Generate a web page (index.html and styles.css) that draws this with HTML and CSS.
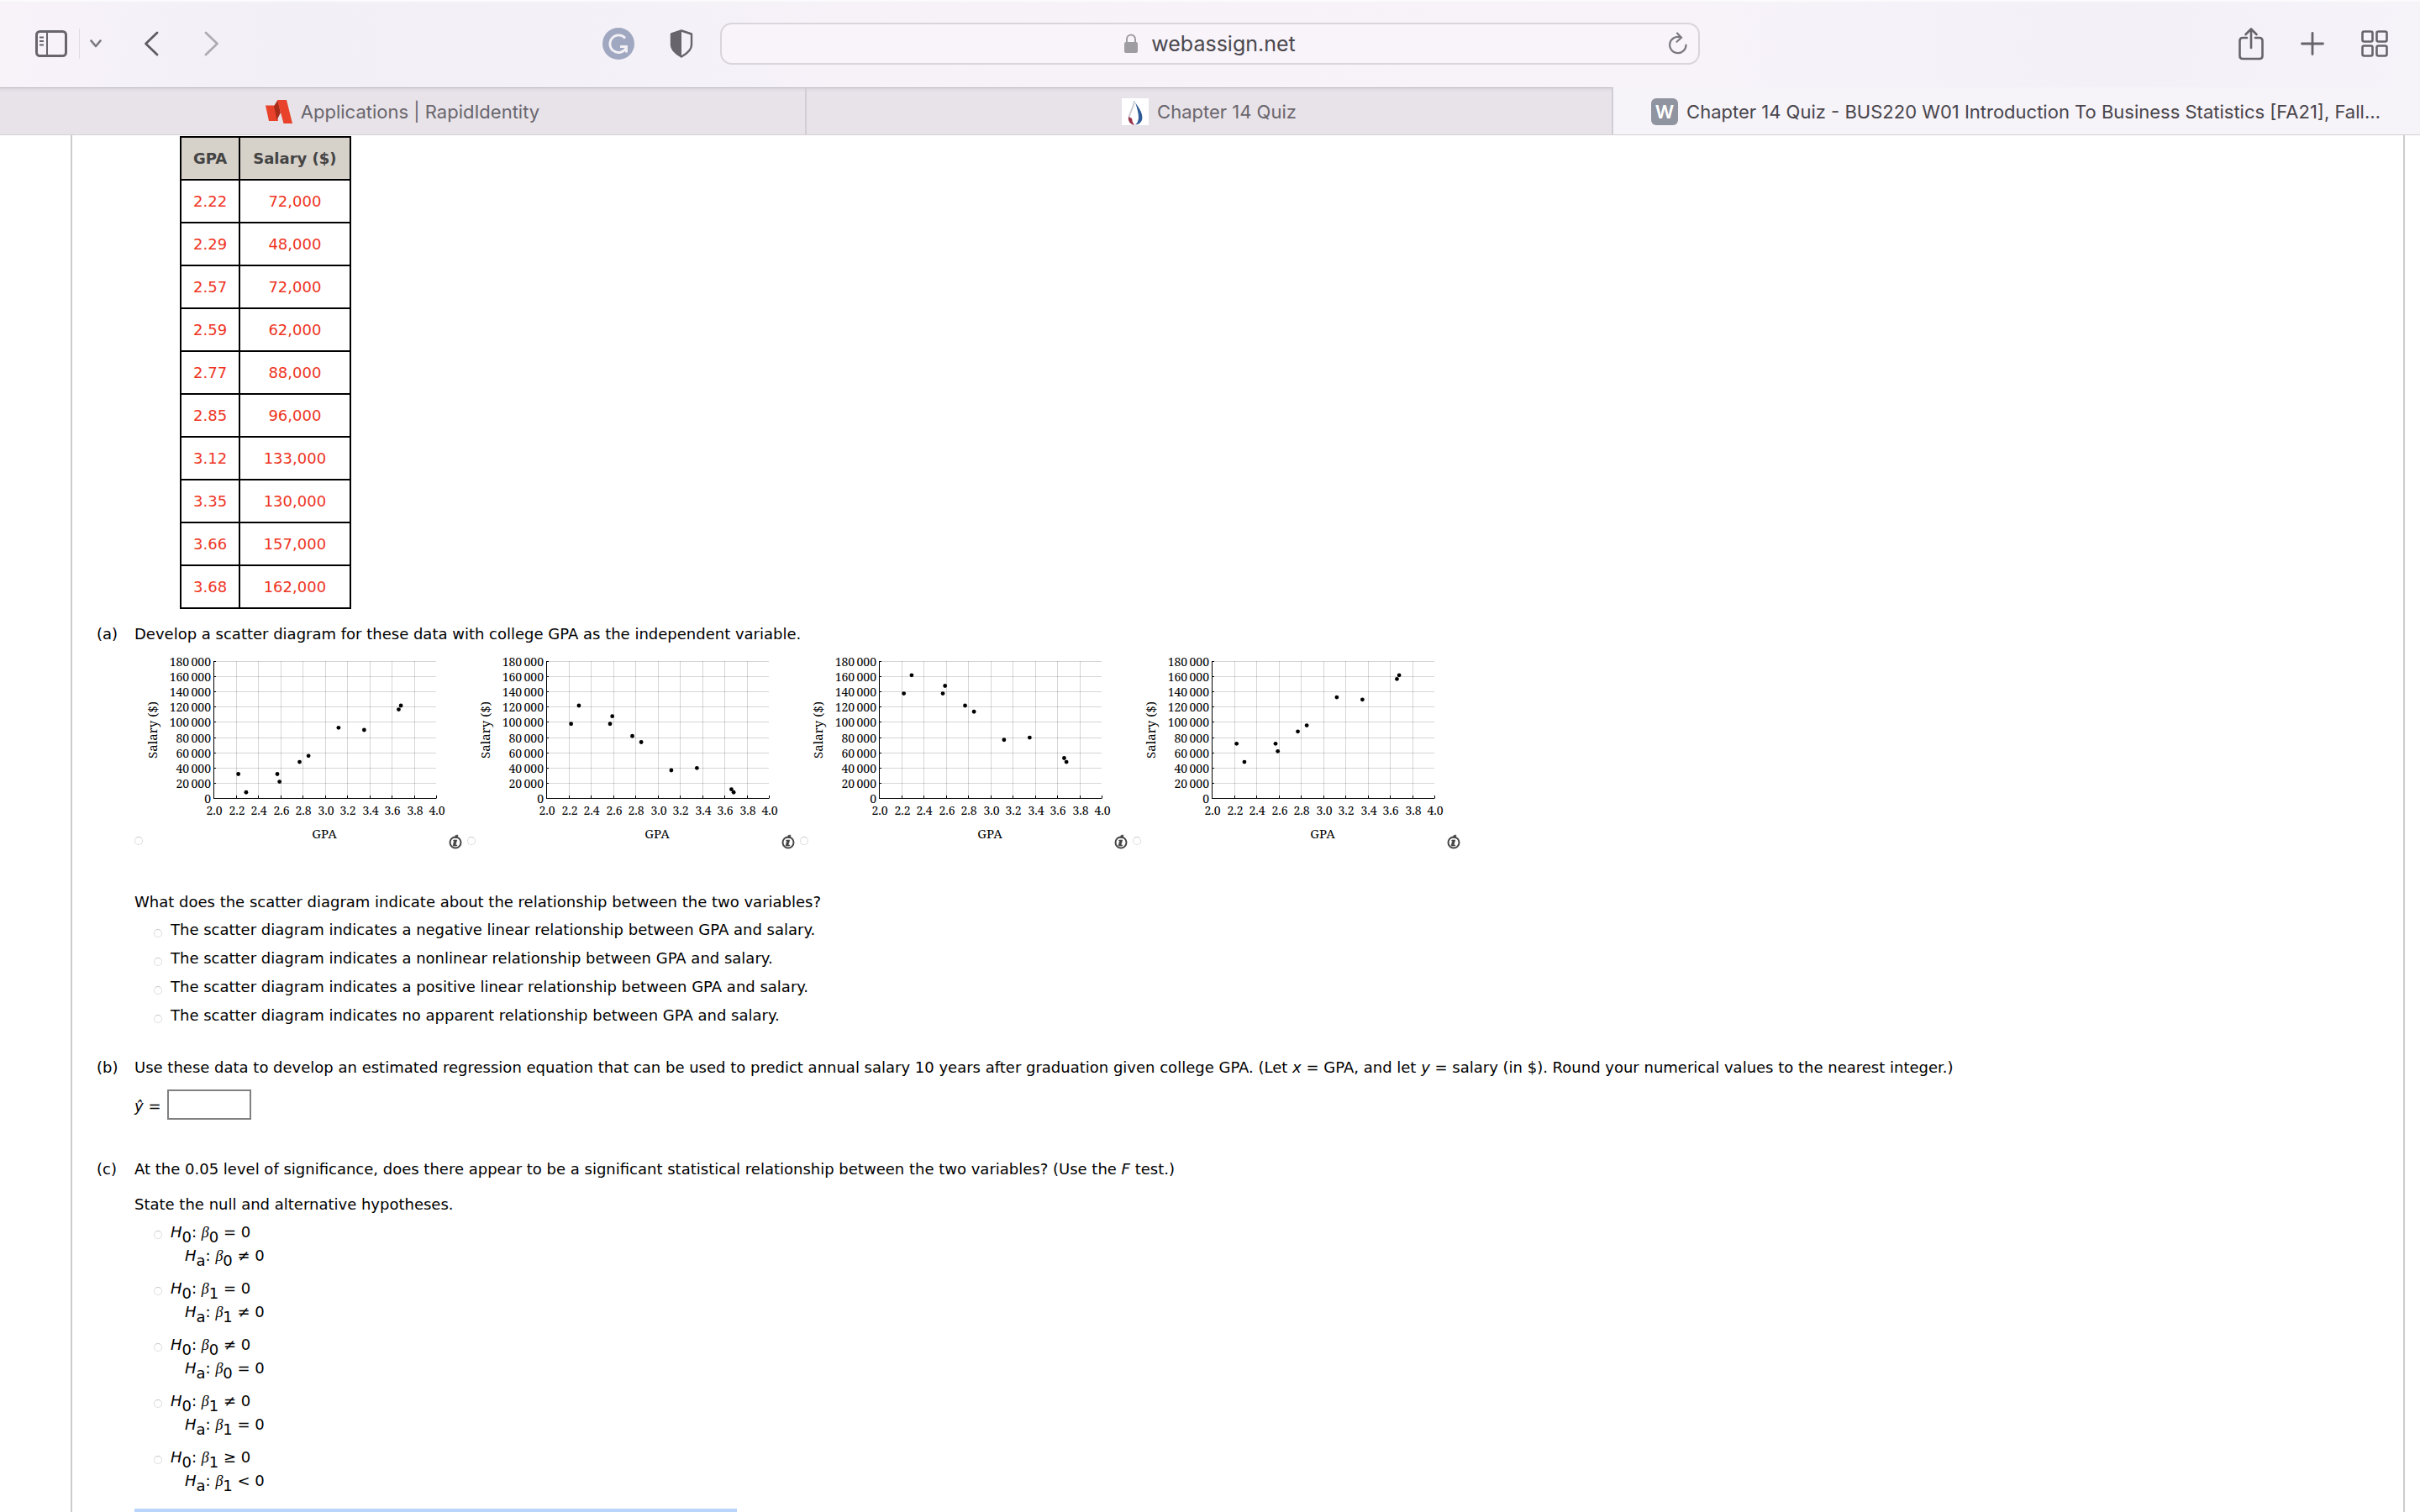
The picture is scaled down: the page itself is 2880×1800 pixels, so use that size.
FILE: index.html
```html
<!DOCTYPE html>
<html lang="en">
<head>
<meta charset="utf-8">
<title>Chapter 14 Quiz - BUS220 W01 Introduction To Business Statistics</title>
<link rel="stylesheet" href="styles.css">
</head>
<body>
<header class="toolbar">
  <div class="tools tools-left">
    <button class="tool" type="button" aria-label="Sidebar">
      <svg width="38" height="32" viewBox="0 0 38 32" fill="none" stroke="#68646b" stroke-width="3"><rect x="1.5" y="1.5" width="35" height="29" rx="4"/><path d="M14 2v28M5 8.500h5M5 13h5M5 17.500h5" stroke-width="2"/></svg>
    </button>
    <span class="tool-divider"></span>
    <button class="tool tool-chevron" type="button" aria-label="Tab groups">
      <svg width="14" height="10" viewBox="0 0 14 10" fill="none" stroke="#7b787f" stroke-width="2.600" stroke-linecap="round" stroke-linejoin="round"><path d="M1.500 1.500 7 8l5.500-6.500"/></svg>
    </button>
    <button class="tool tool-back" type="button" aria-label="Back">
      <svg width="18" height="30" viewBox="0 0 18 30" fill="none" stroke="#605c63" stroke-width="2.800" stroke-linecap="round" stroke-linejoin="round"><path d="M16 2 2.500 15 16 28"/></svg>
    </button>
    <button class="tool tool-forward" type="button" aria-label="Forward">
      <svg width="18" height="30" viewBox="0 0 18 30" fill="none" stroke="#aeabb2" stroke-width="2.800" stroke-linecap="round" stroke-linejoin="round"><path d="m2 2 13.500 13L2 28"/></svg>
    </button>
    <button class="tool tool-ext" type="button" aria-label="Grammar checker">
      <svg width="38" height="38" viewBox="0 0 38 38" fill="none"><circle cx="19" cy="19" r="19" fill="#a0a8c1"/><path d="M27 12.500A10.300 10.300 0 1 0 28 24.500M21 22.500h7.500v7" stroke="#f3f1f6" stroke-width="2.800"/></svg>
    </button>
    <button class="tool" type="button" aria-label="Privacy report">
      <svg width="28" height="34" viewBox="0 0 28 34"><path d="M14 1.500 26 5.500v13c0 6-5 10-12 14-7-4-12-8-12-14v-13z" fill="none" stroke="#68646b" stroke-width="2.400" stroke-linejoin="round"/><path d="M14 1 1.500 5.500v13c0 6 5 10 12.500 14z" fill="#68646b"/></svg>
    </button>
  </div>
  <button class="address" type="button">
    <svg class="lock" width="16" height="24" viewBox="0 0 16 24"><rect y="10" width="16" height="13" rx="2" fill="#a09da2"/><path d="M3 11V6.500a5 5 0 0 1 10 0V11" fill="none" stroke="#a09da2" stroke-width="2"/></svg>
    <span>webassign.net</span>
    <svg class="reload" width="24" height="28" viewBox="0 0 24 28" fill="none" stroke="#7b787f" stroke-width="2.200" stroke-linecap="round"><path d="M14.500 6.200A9.700 9.700 0 1 0 21.500 15.500M11 1.500l5 5.200-5.500 5"/></svg>
  </button>
  <div class="tools tools-right">
    <button class="tool" type="button" aria-label="Share">
      <svg width="30" height="40" viewBox="0 0 30 40" fill="none" stroke="#68646b" stroke-width="2.600" stroke-linecap="round" stroke-linejoin="round"><path d="M10 13H5q-3.500 0-3.500 3.500v18Q1.500 38 5 38h20q3.500 0 3.500-3.500v-18Q28.500 13 25 13h-5M15 25V3M8.500 9 15 2.500 21.500 9"/></svg>
    </button>
    <button class="tool" type="button" aria-label="New tab">
      <svg width="28" height="28" viewBox="0 0 28 28" stroke="#68646b" stroke-width="2.800" stroke-linecap="round"><path d="M14 1.500v25M1.500 14h25"/></svg>
    </button>
    <button class="tool" type="button" aria-label="Tab overview">
      <svg width="32" height="32" viewBox="0 0 32 32" fill="none" stroke="#68646b" stroke-width="2.600"><rect x="1.500" y="1.500" width="12" height="12" rx="2"/><rect x="18.500" y="1.500" width="12" height="12" rx="2"/><rect x="1.500" y="18.500" width="12" height="12" rx="2"/><rect x="18.500" y="18.500" width="12" height="12" rx="2"/></svg>
    </button>
  </div>
</header>
<nav class="tabs">
  <a class="tab" href="#applications">
    <svg width="32" height="32" viewBox="0 0 32 32"><path d="M0 8.500h11L15 27H4z" fill="#e8432a"/><path d="M10 9.500 14.500 2 18 17l-4.500 9z" fill="#a82c1a"/><path d="M14 2h11l7 28H21.500z" fill="#e8432a"/></svg>
    <span class="tab-title">Applications | RapidIdentity</span>
  </a>
  <a class="tab" href="#quiz">
    <svg width="32" height="32" viewBox="0 0 32 32" fill="none"><path d="M0 0h32v32H0z" fill="#fff"/><path d="M15 3C14 12 8 19 8.500 25" stroke="#c9ccd2" stroke-width="2"/><path d="M16 5C21 12 26 19 24 26q-2 5-8 5.500 4-3 4-9T16 5z" fill="#2f5c98"/><path d="M8 22q-1 8 7 10-3-4-3-8z" fill="#98324a"/></svg>
    <span class="tab-title">Chapter 14 Quiz</span>
  </a>
  <a class="tab tab-active" href="#webassign" aria-current="page">
    <span class="tab-letter">W</span>
    <span class="tab-title">Chapter 14 Quiz - BUS220 W01 Introduction To Business Statistics [FA21], Fall…</span>
  </a>
</nav>
<main class="page">
  <table class="data">
    <thead><tr><th>GPA</th><th>Salary ($)</th></tr></thead>
    <tbody>
      <tr><td>2.22</td><td>72,000</td></tr>
      <tr><td>2.29</td><td>48,000</td></tr>
      <tr><td>2.57</td><td>72,000</td></tr>
      <tr><td>2.59</td><td>62,000</td></tr>
      <tr><td>2.77</td><td>88,000</td></tr>
      <tr><td>2.85</td><td>96,000</td></tr>
      <tr><td>3.12</td><td>133,000</td></tr>
      <tr><td>3.35</td><td>130,000</td></tr>
      <tr><td>3.66</td><td>157,000</td></tr>
      <tr><td>3.68</td><td>162,000</td></tr>
    </tbody>
  </table>

  <section class="part">
    <span>(a)</span>
    <div>
      <p>Develop a scatter diagram for these data with college GPA as the independent variable.</p>
      <div class="charts" id="charts"></div>
      <p>What does the scatter diagram indicate about the relationship between the two variables?</p>
      <div class="choices">
        <label class="choice"><input class="radio" type="radio" name="relation"><span>The scatter diagram indicates a negative linear relationship between GPA and salary.</span></label>
        <label class="choice"><input class="radio" type="radio" name="relation"><span>The scatter diagram indicates a nonlinear relationship between GPA and salary.</span></label>
        <label class="choice"><input class="radio" type="radio" name="relation"><span>The scatter diagram indicates a positive linear relationship between GPA and salary.</span></label>
        <label class="choice"><input class="radio" type="radio" name="relation"><span>The scatter diagram indicates no apparent relationship between GPA and salary.</span></label>
      </div>
    </div>
  </section>

  <section class="part part-b">
    <span>(b)</span>
    <div>
      <p>Use these data to develop an estimated regression equation that can be used to predict annual salary 10 years after graduation given college GPA. (Let <i>x</i> = GPA, and let <i>y</i> = salary (in $). Round your numerical values to the nearest integer.)</p>
      <div class="equation"><label for="yhat"><i>ŷ</i> =</label><input class="answer" id="yhat" type="text"></div>
    </div>
  </section>

  <section class="part part-c">
    <span>(c)</span>
    <div>
      <p>At the 0.05 level of significance, does there appear to be a significant statistical relationship between the two variables? (Use the <i>F</i> test.)</p>
      <p class="prompt">State the null and alternative hypotheses.</p>
      <div class="hypotheses">
        <label class="hypothesis"><input class="radio" type="radio" name="hyp"><span><span class="null"><i>H</i><sub>0</sub>: <i class="beta">β</i><sub>0</sub> = 0</span><span class="alt"><i>H</i><sub>a</sub>: <i class="beta">β</i><sub>0</sub> ≠ 0</span></span></label>
        <label class="hypothesis"><input class="radio" type="radio" name="hyp"><span><span class="null"><i>H</i><sub>0</sub>: <i class="beta">β</i><sub>1</sub> = 0</span><span class="alt"><i>H</i><sub>a</sub>: <i class="beta">β</i><sub>1</sub> ≠ 0</span></span></label>
        <label class="hypothesis"><input class="radio" type="radio" name="hyp"><span><span class="null"><i>H</i><sub>0</sub>: <i class="beta">β</i><sub>0</sub> ≠ 0</span><span class="alt"><i>H</i><sub>a</sub>: <i class="beta">β</i><sub>0</sub> = 0</span></span></label>
        <label class="hypothesis"><input class="radio" type="radio" name="hyp"><span><span class="null"><i>H</i><sub>0</sub>: <i class="beta">β</i><sub>1</sub> ≠ 0</span><span class="alt"><i>H</i><sub>a</sub>: <i class="beta">β</i><sub>1</sub> = 0</span></span></label>
        <label class="hypothesis"><input class="radio" type="radio" name="hyp"><span><span class="null"><i>H</i><sub>0</sub>: <i class="beta">β</i><sub>1</sub> ≥ 0</span><span class="alt"><i>H</i><sub>a</sub>: <i class="beta">β</i><sub>1</sub> &lt; 0</span></span></label>
      </div>
      <div class="highlight"></div>
    </div>
  </section>
</main>
<script src="charts.js"></script>
</body>
</html>
```
FILE: styles.css
```css
* { box-sizing: border-box; }

body {
  margin: 0;
  min-height: 100vh;
  display: flex;
  flex-direction: column;
  background: #fff;
  color: #000;
  font: 18px/24px "DejaVu Sans", Verdana, sans-serif;
}

p { margin: 0; }

button {
  margin: 0;
  padding: 0;
  border: 0;
  background: none;
  font: inherit;
  color: inherit;
}

svg { display: block; }

/* Browser toolbar */
.toolbar {
  display: grid;
  grid-template-columns: 1fr 1166px 1fr;
  align-items: center;
  height: 104px;
  box-shadow: inset 0 2px #fbfafc;
  background: linear-gradient(90deg, #f8f3f9, #f2eff7 12%, #f6f2f8 35%, #f7f3f9 70%, #f3f0f8 88%, #f6f3f9);
  font-family: Inter, sans-serif;
}

.tools {
  display: flex;
  align-items: center;
}

.tools-left { padding: 0 32px 0 42px; }
.tools-right { justify-content: flex-end; gap: 44px; padding-right: 38px; }

.tool-divider { width: 1px; height: 36px; margin: 0 12px 0 14px; background: #dedbe1; }
.tool-back { margin-left: 50px; }
.tool-forward { margin-left: 54px; }
.tool-ext { margin: 0 42px 0 auto; }

.address {
  display: flex;
  align-items: center;
  justify-content: center;
  gap: 16px;
  position: relative;
  height: 50px;
  border: 2px solid #d9d5db;
  border-radius: 14px;
  background: #f8f4fa;
  color: #4b484e;
  font-size: 25px;
}

.reload { position: absolute; right: 12px; }

/* Tab strip */
.tabs {
  display: grid;
  grid-template-columns: repeat(3, 1fr);
  height: 57px;
  border-bottom: 1px solid #d5d2d7;
  font: 22px/32px Inter, sans-serif;
}

.tab {
  display: flex;
  align-items: center;
  justify-content: center;
  gap: 10px;
  min-width: 0;
  padding: 0 40px;
  border-top: 1px solid #bdb9c0;
  border-right: 2px solid #d2ced5;
  background: linear-gradient(#dcd8df, #e7e3e9 5px);
  color: #6a666d;
  text-decoration: none;
}

.tab-active {
  border-color: transparent;
  background: #f6f3f9;
  color: #48454b;
}

.tab-title { white-space: nowrap; }

.tab-letter {
  width: 32px;
  border-radius: 6px;
  background: #9093a0;
  color: #fff;
  font-weight: 600;
  text-align: center;
}

/* Assignment page */
.page {
  flex: 1;
  margin: 0 18px 0 84px;
  padding: 1px 28px 0 29px;
  border: solid #ccc;
  border-width: 0 2px;
}

.data {
  margin: 0 0 18px 99px;
  border-collapse: collapse;
  text-align: center;
}

.data th,
.data td {
  height: 51px;
  padding: 0 14px;
  border: 2px solid #000;
}

.data th:last-child { padding: 0 15px; }

.data th { background: #d6d1c9; color: #444; }
.data td { color: #ee3524; }

.part {
  display: grid;
  grid-template-columns: 45px 1fr;
}

.part-b { margin-top: 33px; }
.part-c { margin-top: 47px; }

/* Scatter charts */
.charts {
  display: flex;
  gap: 6px;
  margin: 9px 0 51px;
}

.chart {
  display: flex;
  align-items: flex-end;
}

.chart .radio { margin-bottom: 5px; }

.plot {
  width: 364px;
  height: 235px;
  font: 14px "Noto Serif", "Liberation Serif", serif;
}

.plot .axis-title { font-size: 15px; }
.plot .grid { stroke: #000; stroke-opacity: .16; stroke-width: 1; }
.plot .axis { fill: none; stroke: #000; stroke-width: 1; }

/* Answers */
.radio {
  flex: none;
  appearance: none;
  width: 10px;
  height: 10px;
  margin: 0;
  border: 1px solid #ddd;
  border-top-color: #c8c8c8;
  border-radius: 50%;
  background: #fff;
}

.choices { margin: 4px 0 0 23px; }

.choice {
  display: flex;
  align-items: center;
  gap: 10px;
  height: 34px;
}

.choice .radio { margin-top: 8px; }

.equation {
  display: flex;
  align-items: center;
  gap: 8px;
  margin-top: 14px;
}

.equation label { padding-top: 4px; }

.answer {
  width: 100px;
  height: 36px;
  border: 2px solid #808080;
  background: #fff;
  font: inherit;
}

.prompt { margin-top: 18px; }

.hypotheses {
  display: grid;
  gap: 11px;
  margin: 7px 0 19px 23px;
  line-height: 28px;
}

.hypothesis { display: flex; gap: 10px; }
.hypothesis .radio { margin-top: 12px; }
.null, .alt { display: block; }
.alt { padding-left: 17px; }

.hypothesis sub {
  font-size: inherit;
  line-height: 0;
  vertical-align: -6px;
}

.beta { font-family: "Liberation Serif", serif; }

.highlight {
  width: 717px;
  height: 4px;
  background: #b8d4fb;
}
```
FILE: charts.js
```js
// Four candidate scatter diagrams: shared GPA values, salaries in thousands.
const gpa = [2.22, 2.29, 2.57, 2.59, 2.77, 2.85, 3.12, 3.35, 3.66, 3.68];
const series = [
  [32, 8, 32, 22, 48, 56, 93, 90, 117, 122],
  [98, 122, 98, 108, 82, 74, 37, 40, 12, 8],
  [138, 162, 138, 148, 122, 114, 77, 80, 53, 48],
  [72, 48, 72, 62, 88, 96, 133, 130, 157, 162]
];

const left = 84, right = 349, top_ = 11, bottom = 174;
const px = g => left + (g - 2) / 2 * (right - left);
const py = s => bottom - s / 180 * (bottom - top_);
const snap = v => Math.round(v) + 0.5;

function plot(values) {
  let grid = '', ticks = '', labels = '';
  for (let i = 0; i <= 10; i++) {
    const x = snap(px(2 + i * 0.2));
    if (i > 0 && i < 10) grid += `M${x} ${top_}V${bottom}`;
    ticks += `M${x} ${bottom}v-3`;
    labels += `<text x="${Math.round(x)}" y="194" text-anchor="middle">${(2 + i * 0.2).toFixed(1)}</text>`;
  }
  for (let s = 0; s <= 180; s += 20) {
    const y = snap(py(s));
    if (s > 0) grid += `M${left} ${y}H${right}`;
    ticks += `M${left} ${y}h3`;
    labels += `<text x="81" y="${Math.round(y) + 5}" text-anchor="end">${s ? s + '\u2009000' : '0'}</text>`;
  }
  const dots = values.map((s, i) => `<circle cx="${px(gpa[i]) + 0.5}" cy="${py(s) + 0.5}" r="2.400"/>`).join('');
  return `<svg class="plot" viewBox="0 0 364 235">
    <path class="grid" d="${grid}"/>
    <path class="axis" d="M${left + 0.5} ${top_}V${bottom + 0.5}H${right + 0.5}${ticks}"/>
    ${labels}${dots}
    <text class="axis-title" transform="translate(17 93) rotate(-90)" text-anchor="middle">Salary ($)</text>
    <text class="axis-title" x="216" y="222" text-anchor="middle">GPA</text>
  </svg>`;
}

const info = `<svg width="16" height="18" viewBox="0 0 16 18"><circle cx="8" cy="10" r="6.500" fill="none" stroke="#444" stroke-width="2"/><path d="M8 1.500 11 1 10 4.500H7.500zM6 7h3.800L8 13h2l-.5 1H5l1.500-6H5.500z" fill="#444" stroke="#444" stroke-width=".6"/></svg>`;

document.getElementById('charts').innerHTML = series.map((values, i) =>
  `<div class="chart"><input class="radio" type="radio" name="diagram" aria-label="Diagram ${i + 1}">${plot(values)}<button type="button" aria-label="About diagram ${i + 1}">${info}</button></div>`
).join('');
```
